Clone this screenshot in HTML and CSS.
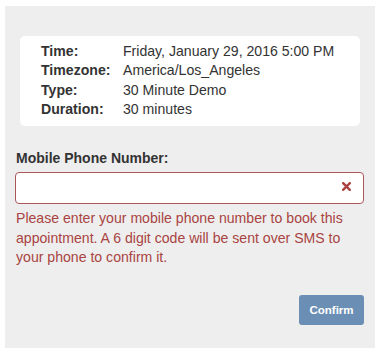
FILE: index.html
```html
<!DOCTYPE html>
<html>
<head>
<meta charset="utf-8">
<link rel="stylesheet" href="styles.css">
</head>
<body>
<div class="panel">
  <div class="card">
    <div class="row"><span class="label">Time:</span><span class="value">Friday, January 29, 2016 5:00 PM</span></div>
    <div class="row"><span class="label">Timezone:</span><span class="value">America/Los_Angeles</span></div>
    <div class="row"><span class="label">Type:</span><span class="value">30 Minute Demo</span></div>
    <div class="row"><span class="label">Duration:</span><span class="value">30 minutes</span></div>
  </div>
  <div class="form">
    <label class="field-label">Mobile Phone Number:</label>
    <div class="input">
      <svg class="x-icon" width="9" height="9" viewBox="0 0 9 9"><path d="M1.2 1.2 L7.8 7.8 M7.8 1.2 L1.2 7.8" stroke="#a94442" stroke-width="2.4" stroke-linecap="square"/></svg>
    </div>
    <p class="error">Please enter your mobile phone number to book this appointment. A 6 digit code will be sent over SMS to your phone to confirm it.</p>
    <div class="actions"><button class="btn">Confirm</button></div>
  </div>
</div>
</body>
</html>
```
FILE: styles.css
```css
html, body { margin: 0; padding: 0; background: #fff; }
body {
  font-family: "Liberation Sans", Arial, Helvetica, sans-serif;
  color: #333;
  padding: 6px 6px 0 5px;
}
.panel {
  width: 370px;
  height: 342px;
  box-sizing: border-box;
  background: #eeeeee;
  padding: 30px 11px 0 10px;
}
.card {
  margin: 0 4px 0 5px;
  background: #fff;
  border-radius: 5px;
  padding: 5.5px 21px 6.5px;
  font-size: 14.1px;
  line-height: 19.6px;
}
.row { display: flex; }
.label { font-weight: bold; width: 82px; flex: none; }
.form { padding-top: 21.5px; }
.field-label {
  display: block;
  font-weight: bold;
  font-size: 14px;
  line-height: 20px;
  padding-left: 1px;
}
.input {
  margin-top: 4.5px;
  height: 32px;
  box-sizing: border-box;
  border: 1px solid #a9585a;
  border-radius: 4px;
  background: #fff;
  display: flex;
  align-items: center;
  justify-content: flex-end;
  padding-right: 12px;
}
.x-icon { display: block; margin-top: -4px; }
.error {
  margin: 4.8px 0 0;
  padding-left: 1px;
  color: #a94442;
  font-size: 14.1px;
  line-height: 19.5px;
}
.actions {
  display: flex;
  justify-content: flex-end;
  margin-top: 27.5px;
}
.btn {
  width: 65px;
  height: 30px;
  border: none;
  border-radius: 3px;
  background: #6b8fb4;
  color: #fff;
  font-family: "Liberation Sans", Arial, sans-serif;
  font-weight: bold;
  font-size: 11.5px;
  padding: 0;
}
```
